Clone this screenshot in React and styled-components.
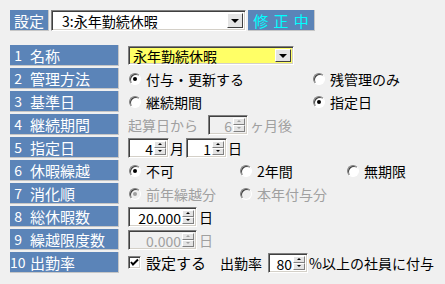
import React from 'react';
import styled, { createGlobalStyle, css } from 'styled-components';

const GlobalStyle = createGlobalStyle`
  html, body {
    margin: 0;
    padding: 0;
    background: #f0f0f0;
  }
  body {
    font-family: "Noto Sans CJK JP", "Noto Sans", sans-serif;
    font-size: 14px;
    color: #000;
  }
`;

const Page = styled.div`
  width: 445px;
  height: 284px;
  box-sizing: border-box;
  padding: 10px 10px 0 10px;
  background: #f0f0f0;
`;

const TopBar = styled.div`
  display: flex;
  align-items: center;
  height: 21px;
  gap: 2px;
  margin-bottom: 14px;
`;

const BlueTag = styled.div`
  height: 21px;
  box-sizing: border-box;
  background: #5b84b8;
  color: ${(p) => p.$color || '#fff'};
  border-bottom: 1px solid #c6c6c6;
  border-right: 1px solid #c6c6c6;
  display: flex;
  align-items: center;
  justify-content: center;
  width: ${(p) => p.$width}px;
  font-size: ${(p) => p.$size || 15}px;
  word-spacing: ${(p) => p.$spacing || 0}px;
  white-space: pre;
  line-height: 1;
`;

const sunken = css`
  box-sizing: border-box;
  border-top: 1px solid #808080;
  border-left: 1px solid #808080;
  border-bottom: 1px solid #fff;
  border-right: 1px solid #fff;
  box-shadow: inset 1px 1px 0 #404040, inset -1px -1px 0 #d4d0c8;
`;

const Select = styled.div`
  ${sunken};
  width: ${(p) => p.$width}px;
  height: ${(p) => p.$height}px;
  background: ${(p) => p.$bg || '#fff'};
  display: flex;
  align-items: center;
  justify-content: space-between;
  padding: 2px;
  line-height: 1;
`;

const SelectText = styled.span`
  padding-left: ${(p) => p.$pad || 2}px;
  font-size: ${(p) => p.$size || 14}px;
  white-space: nowrap;
`;

const DropButton = styled.div`
  width: 16px;
  height: 100%;
  box-sizing: border-box;
  background: #e4e4e4;
  border-top: 1px solid #fff;
  border-left: 1px solid #fff;
  border-right: 1px solid #404040;
  border-bottom: 1px solid #404040;
  display: flex;
  align-items: center;
  justify-content: center;

  &::after {
    content: '';
    border-left: 4px solid transparent;
    border-right: 4px solid transparent;
    border-top: 4px solid #000;
  }
`;

const Rows = styled.div`
  display: flex;
  flex-direction: column;
  gap: 2px;
`;

const Row = styled.div`
  display: flex;
  align-items: center;
  height: 21px;
  gap: 9px;
`;

const Label = styled.div`
  width: 109px;
  height: 21px;
  flex: none;
  box-sizing: border-box;
  background: #5b84b8;
  color: #fff;
  border-right: 1px solid #c6c6c6;
  border-bottom: 1px solid #c6c6c6;
  display: flex;
  align-items: center;
  line-height: 1;
  font-size: 15px;
`;

const Num = styled.span`
  width: 12px;
  text-align: right;
  margin-right: 8px;
  white-space: nowrap;
  font-size: 14px;
`;

const Content = styled.div`
  display: flex;
  align-items: center;
  height: 21px;
  line-height: 1;
  white-space: nowrap;
`;

const Option = styled.span`
  display: inline-flex;
  align-items: center;
  width: ${(p) => (p.$width ? `${p.$width}px` : 'auto')};
  color: ${(p) => (p.$disabled ? '#a0a0a0' : '#000')};
  margin-left: 1px;
`;

const Radio = styled.span`
  width: 12px;
  height: 12px;
  box-sizing: border-box;
  border-radius: 50%;
  border: 1px solid;
  border-color: #808080 #fff #fff #808080;
  background: ${(p) => (p.$disabled ? '#f0f0f0' : '#fff')};
  box-shadow: inset 1px 1px 0 #404040;
  margin-right: 5px;
  display: flex;
  align-items: center;
  justify-content: center;

  &::after {
    content: '';
    display: ${(p) => (p.$checked ? 'block' : 'none')};
    width: 4px;
    height: 4px;
    border-radius: 50%;
    background: ${(p) => (p.$disabled ? '#a0a0a0' : '#000')};
  }
`;

const Check = styled.span`
  ${sunken};
  width: 13px;
  height: 13px;
  background: #fff;
  margin-right: 5px;
  display: flex;
  align-items: center;
  justify-content: center;
`;

const Text = styled.span`
  color: ${(p) => (p.$disabled ? '#a0a0a0' : '#000')};
  margin: 0 ${(p) => p.$mr || 0}px 0 ${(p) => p.$ml || 0}px;
  font-size: ${(p) => p.$size || 14}px;
`;

const Spin = styled.div`
  ${sunken};
  width: ${(p) => p.$width}px;
  height: 20px;
  background: ${(p) => (p.$disabled ? '#f0f0f0' : '#fff')};
  display: flex;
  align-items: stretch;
  padding: 2px;
  flex: none;
`;

const SpinValue = styled.span`
  flex: 1;
  text-align: right;
  padding-right: 1px;
  font-size: 14px;
  line-height: 16px;
  color: ${(p) => (p.$disabled ? '#a0a0a0' : '#000')};
`;

const SpinButtons = styled.div`
  width: 12px;
  display: flex;
  flex-direction: column;
`;

const SpinButton = styled.div`
  flex: 1;
  box-sizing: border-box;
  background: #e4e4e4;
  border-top: 1px solid #fff;
  border-left: 1px solid #fff;
  border-right: 1px solid #808080;
  border-bottom: 1px solid #808080;
  display: flex;
  align-items: center;
  justify-content: center;

  &::after {
    content: '';
    border-left: 2px solid transparent;
    border-right: 2px solid transparent;
    ${(p) =>
      p.$up
        ? `border-bottom: 2px solid ${p.$disabled ? '#a0a0a0' : '#000'};`
        : `border-top: 2px solid ${p.$disabled ? '#a0a0a0' : '#000'};`}
  }
`;

const SpinBox = ({ value, width, disabled }) => (
  <Spin $width={width} $disabled={disabled}>
    <SpinValue $disabled={disabled}>{value}</SpinValue>
    <SpinButtons>
      <SpinButton $up $disabled={disabled} />
      <SpinButton $disabled={disabled} />
    </SpinButtons>
  </Spin>
);

const RadioOption = ({ children, checked, disabled, width }) => (
  <Option $width={width} $disabled={disabled}>
    <Radio $checked={checked} $disabled={disabled} />
    {children}
  </Option>
);

const CheckMark = () => (
  <svg width="9" height="9" viewBox="0 0 9 9">
    <path d="M1 4 L3 6.5 L8 1.5" stroke="#000" strokeWidth="2" fill="none" />
  </svg>
);

const Field = ({ num, name, children }) => (
  <Row>
    <Label>
      <Num>{num}</Num>
      {name}
    </Label>
    <Content>{children}</Content>
  </Row>
);

export default function App() {
  return (
    <Page>
      <GlobalStyle />
      <TopBar>
        <BlueTag $width={39}>設定</BlueTag>
        <Select $width={195} $height={21}>
          <SelectText $pad={8} $size={14}>3:永年勤続休暇</SelectText>
          <DropButton />
        </Select>
        <BlueTag $width={67} $color="#00ffff" $size={15} $spacing={2}>
          修 正 中
        </BlueTag>
      </TopBar>

      <Rows>
        <Field num="1" name="名称">
          <Select $width={166} $height={19} $bg="#ffff66">
            <SelectText $pad={0}>永年勤続休暇</SelectText>
            <DropButton />
          </Select>
        </Field>
        <Field num="2" name="管理方法">
          <RadioOption width={183} checked>付与・更新する</RadioOption>
          <RadioOption>残管理のみ</RadioOption>
        </Field>
        <Field num="3" name="基準日">
          <RadioOption width={183}>継続期間</RadioOption>
          <RadioOption checked>指定日</RadioOption>
        </Field>
        <Field num="4" name="継続期間">
          <Text $disabled $mr={10}>起算日から</Text>
          <SpinBox value="6" width={40} disabled />
          <Text $disabled $ml={2}>ヶ月後</Text>
        </Field>
        <Field num="5" name="指定日">
          <SpinBox value="4" width={41} />
          <Text $ml={1} $mr={2}>月</Text>
          <SpinBox value="1" width={41} />
          <Text $ml={1}>日</Text>
        </Field>
        <Field num="6" name="休暇繰越">
          <RadioOption width={110} checked>不可</RadioOption>
          <RadioOption width={106}>2年間</RadioOption>
          <RadioOption>無期限</RadioOption>
        </Field>
        <Field num="7" name="消化順">
          <RadioOption width={110} checked disabled>前年繰越分</RadioOption>
          <RadioOption disabled>本年付与分</RadioOption>
        </Field>
        <Field num="8" name="総休暇数">
          <SpinBox value="20.000" width={69} />
          <Text $ml={2}>日</Text>
        </Field>
        <Field num="9" name="繰越限度数">
          <SpinBox value="0.000" width={69} disabled />
          <Text $ml={2} $disabled>日</Text>
        </Field>
        <Field num="10" name="出勤率">
          <Check>
            <CheckMark />
          </Check>
          <Text $size={15} $mr={14}>設定する</Text>
          <Text $mr={6}>出勤率</Text>
          <SpinBox value="80" width={40} />
          <Text $ml={1}>%以上の社員に付与</Text>
        </Field>
      </Rows>
    </Page>
  );
}
